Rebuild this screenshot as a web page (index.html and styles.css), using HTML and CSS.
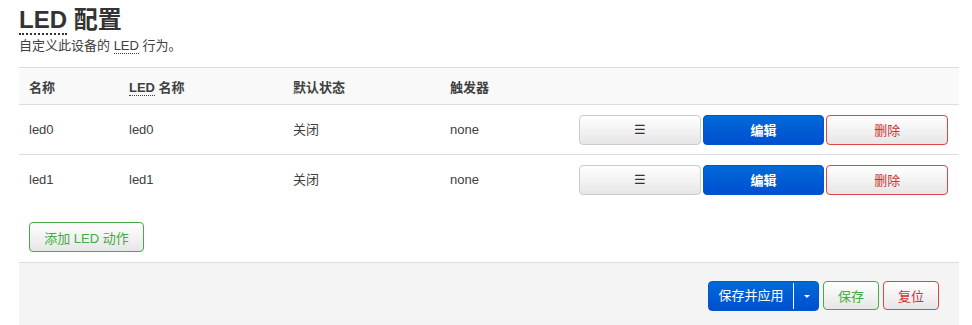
FILE: index.html
```html
<!DOCTYPE html>
<html lang="zh-CN">

<head>
    <meta charset="utf-8">
    <meta name="viewport" content="width=device-width, initial-scale=1.0">
    <title>LED 配置</title>

    <link rel="stylesheet" href="styles.css">

</head>

<body>

    <div class="cbi-map">

        <h2 class="titel"><abbr>LED</abbr> 配置</h2>
        <p class="beskrivelse">自定义此设备的 <abbr>LED</abbr> 行为。</p>

        <table class="led_tabel">
            <colgroup>
                <col class="c1">
                <col class="c2">
                <col class="c3">
                <col class="c4">
                <col class="c5">
            </colgroup>
            <tr class="hoved">
                <th>名称</th>
                <th><abbr>LED</abbr> 名称</th>
                <th>默认状态</th>
                <th>触发器</th>
                <th></th>
            </tr>
            <tr>
                <td>led0</td>
                <td>led0</td>
                <td>关闭</td>
                <td>none</td>
                <td>
                    <div class="knapper">
                        <button class="btn">☰</button>
                        <button class="btn blaa">编辑</button>
                        <button class="btn roed">删除</button>
                    </div>
                </td>
            </tr>
            <tr>
                <td>led1</td>
                <td>led1</td>
                <td>关闭</td>
                <td>none</td>
                <td>
                    <div class="knapper">
                        <button class="btn">☰</button>
                        <button class="btn blaa">编辑</button>
                        <button class="btn roed">删除</button>
                    </div>
                </td>
            </tr>
        </table>

        <div class="tilfoej">
            <button class="btn groen">添加 LED 动作</button>
        </div>

        <div class="bund">
            <div class="dropdown">
                <span class="hoved_del">保存并应用</span>
                <span class="pil"></span>
            </div>
            <button class="btn groen lille">保存</button>
            <button class="btn roed lille">复位</button>
        </div>

    </div>

</body></html>
```

FILE: styles.css
```css
html {
    background-color: white;
}

body {
    margin: 0;
    font-family: "Liberation Sans", "Noto Sans CJK SC", sans-serif;
    font-size: 13px;
    color: #404040;
}

.cbi-map {
    width: 940px;
    margin-left: 19px;
}

abbr {
    text-decoration: none;
    border-bottom: 1px dotted #404040;
}

.titel {
    margin: 0;
    padding-top: 4px;
    font-size: 24px;
    line-height: 32px;
    font-weight: bold;
    color: #333;
}

.titel abbr {
    border-bottom: 2px dotted #333;
}

.beskrivelse {
    margin: 2px 0 13px 0;
    line-height: 16px;
}

.led_tabel {
    width: 100%;
    border-collapse: collapse;
    table-layout: fixed;
}

.c1 { width: 100px; }
.c2 { width: 164px; }
.c3 { width: 157px; }
.c4 { width: 129px; }
.c5 { width: 390px; }

.led_tabel th {
    text-align: left;
    font-weight: bold;
    color: #404040;
    height: 36px;
    padding: 0 10px;
    background-color: #f9f9f9;
    border-top: 1px solid #ddd;
    border-bottom: 1px solid #ddd;
}

.led_tabel td {
    height: 49px;
    padding: 0 10px;
    border-bottom: 1px solid #ddd;
    line-height: 18px;
}

.led_tabel tr:last-child td {
    border-bottom: none;
}

.knapper {
    display: flex;
    justify-content: flex-end;
    gap: 2px;
    padding-right: 1px;
}

.btn {
    font-family: "Liberation Sans", "Noto Sans CJK SC", sans-serif;
    font-size: 13px;
    color: #333;
    height: 30px;
    width: 122px;
    border: 1px solid #ccc;
    border-radius: 4px;
    background: linear-gradient(#ffffff, #e6e6e6);
    padding: 0;
}

.blaa {
    color: white;
    font-weight: bold;
    border-color: #0056cc;
    background: linear-gradient(#006ad8, #004fd0);
}

.roed {
    color: #c33;
    border-color: #d44;
}

.groen {
    color: #4a4;
    border-color: #4a4;
}

.tilfoej {
    padding: 18px 10px 10px 10px;
}

.tilfoej .btn {
    width: 115px;
}

.bund {
    background-color: #f4f4f4;
    border-top: 1px solid #ddd;
    height: 45px;
    padding: 18px 20px 0 0;
    display: flex;
    justify-content: flex-end;
    align-items: flex-start;
    gap: 4px;
}

.lille {
    width: 56px;
    height: 29px;
}

.dropdown {
    display: flex;
    height: 28px;
    border-radius: 4px;
    border: 1px solid #0056cc;
    background: linear-gradient(#006ad8, #004fd0);
    color: white;
    line-height: 28px;
}

.hoved_del {
    width: 84px;
    text-align: center;
    border-right: 1px solid white;
    margin: 1px 0;
    line-height: 26px;
}

.pil {
    width: 24px;
    position: relative;
}

.pil::after {
    content: "";
    position: absolute;
    left: 10px;
    top: 13px;
    border-left: 3px solid transparent;
    border-right: 3px solid transparent;
    border-top: 3px solid white;
}
```
